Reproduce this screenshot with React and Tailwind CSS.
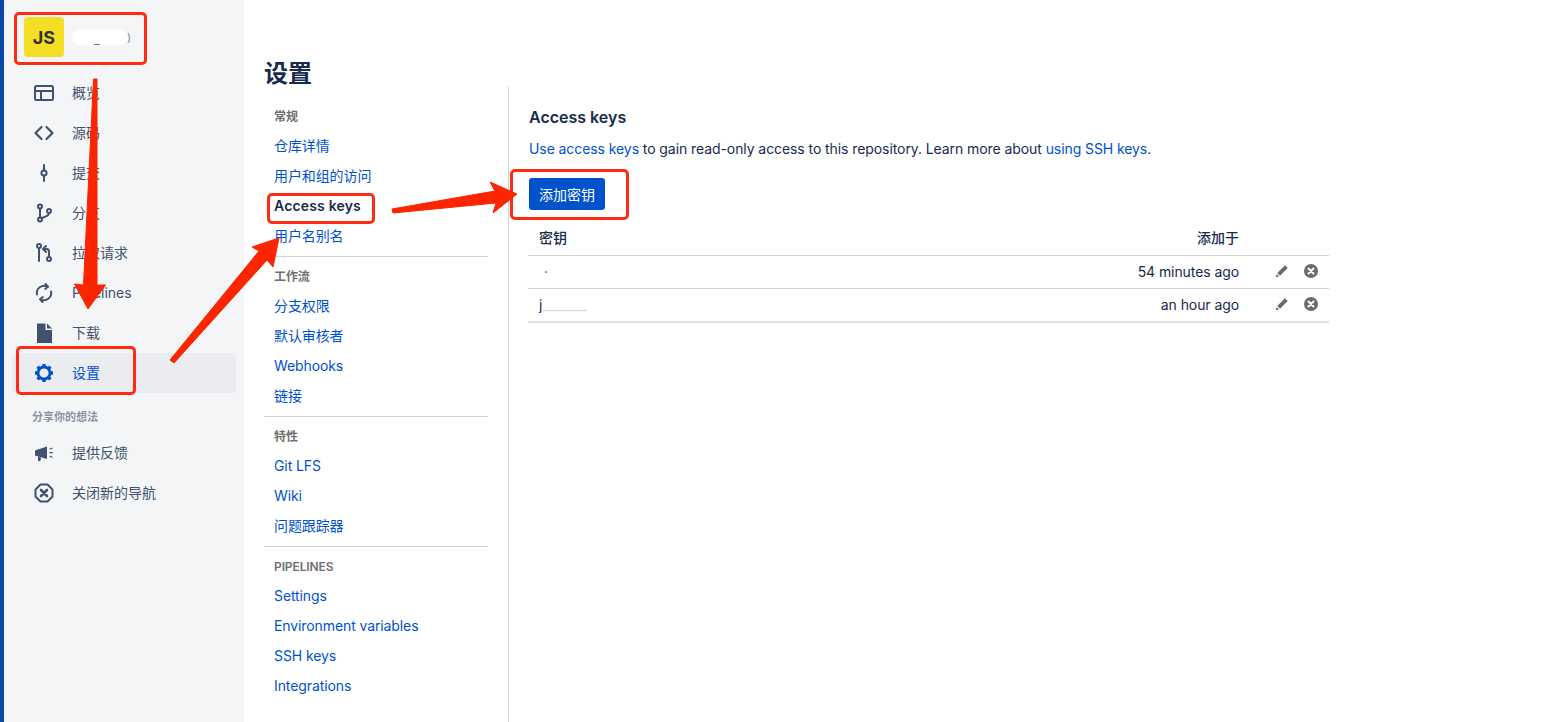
import { Fragment } from 'react';

const font = { fontFamily: 'Inter, "Noto Sans CJK SC", sans-serif' };

const navItems = [
  { label: '概览', icon: 'overview' },
  { label: '源码', icon: 'code' },
  { label: '提交', icon: 'commit' },
  { label: '分支', icon: 'branch' },
  { label: '拉取请求', icon: 'pr' },
  { label: 'Pipelines', icon: 'pipelines' },
  { label: '下载', icon: 'file' },
  { label: '设置', icon: 'gear', active: true },
];

const settingsGroups = [
  { title: '常规', links: ['仓库详情', '用户和组的访问', 'Access keys', '用户名别名'] },
  { title: '工作流', links: ['分支权限', '默认审核者', 'Webhooks', '链接'] },
  { title: '特性', links: ['Git LFS', 'Wiki', '问题跟踪器'] },
  { title: 'PIPELINES', links: ['Settings', 'Environment variables', 'SSH keys', 'Integrations'] },
];

function NavIcon({ name }) {
  const stroke = { fill: 'none', stroke: 'currentColor', strokeWidth: 2, strokeLinecap: 'round', strokeLinejoin: 'round' };
  return (
    <svg viewBox="0 0 24 24" className="w-6 h-6 shrink-0">
      {name === 'overview' && (
        <g {...stroke}>
          <rect x="3" y="5" width="18" height="14" rx="1.5" />
          <path d="M3 10h18M9 10v9" />
        </g>
      )}
      {name === 'code' && <path {...stroke} strokeWidth="2.2" d="M9.5 6 3.5 12l6 6M14.5 6l6 6-6 6" />}
      {name === 'commit' && (
        <g {...stroke}>
          <circle cx="12" cy="12" r="2.6" />
          <path d="M12 4v5.4M12 14.6V20" />
        </g>
      )}
      {name === 'branch' && (
        <g {...stroke}>
          <circle cx="8" cy="5.5" r="2" />
          <circle cx="8" cy="18.5" r="2" />
          <circle cx="17" cy="10" r="2" />
          <path d="M8 7.5v9M17 12c0 3-3 3.5-7.5 5" />
        </g>
      )}
      {name === 'pr' && (
        <g {...stroke}>
          <circle cx="7" cy="5" r="2" />
          <path d="M7 7v13" />
          <circle cx="17" cy="18" r="2" />
          <path d="M17 16v-5.5c0-1.5-1-2.5-2.500-2.500H12M14 5l-3 3 3 3" />
        </g>
      )}
      {name === 'pipelines' && (
        <g {...stroke}>
          <path d="M5 13.500A7.200 7.200 0 0 1 15.500 5.700M19 10.500A7.200 7.200 0 0 1 8.500 18.300" />
          <path d="M13.500 3l2.500 2.800-2.800 2.200M10.500 21 8 18.200l2.800-2.200" />
        </g>
      )}
      {name === 'file' && <path fill="currentColor" d="M5 2.500h8.500v6.500H20V22H5zM15 2.500 20 7.500h-5z" />}
      {name === 'gear' && (
        <g>
          <circle cx="12" cy="12" r="6" fill="none" stroke="currentColor" strokeWidth="2.800" />
          <path fill="none" stroke="currentColor" strokeWidth="3.400" d="M12 3v3M12 18v3M3 12h3M18 12h3M5.600 5.600l2 2M16.400 16.400l2 2M5.600 18.400l2-2M16.400 7.600l2-2" />
        </g>
      )}
      {name === 'megaphone' && (
        <g>
          <path fill="currentColor" d="M3 9.500 15 5.500v12.500L3 14.500zM6 15.500l3 1-.6 3.500H6z" />
          <path {...stroke} strokeWidth="1.200" d="M18 8l2-.8M18 11.700h2.400M18 15.400l2 .8" />
        </g>
      )}
      {name === 'close' && (
        <g {...stroke}>
          <path d="M8.500 3.500h7l5 5v7l-5 5h-7l-5-5v-7z" strokeWidth="2" />
          <path d="m9 9 6 6M15 9l-6 6" strokeWidth="2.600" />
        </g>
      )}
    </svg>
  );
}

function NavRow({ item }) {
  return (
    <div className={`h-10 flex items-center pl-5 pr-2 rounded ${item.active ? 'bg-[#ebecf0] text-[#0052cc]' : 'text-[#42526e]'}`}>
      <NavIcon name={item.icon} />
      <span className="ml-4 mb-[2px] text-[14px]">{item.label}</span>
    </div>
  );
}

function Sidebar() {
  return (
    <aside className="w-[244px] shrink-0 flex bg-[#f4f5f7]">
      <div className="w-1 bg-[#0747a6]" />
      <div className="flex-1 pl-2 pr-2">
        <div className="h-[73px] pt-[17px] pl-3 flex items-start">
          <div className="w-10 h-10 rounded bg-[#f4df26] flex items-center justify-center text-[18px] font-bold text-[#323330]">JS</div>
          {/* blurred out repo name */}
          <div className="relative ml-2 mt-[13px] w-[56px] h-[15px]">
            <div className="absolute inset-0 rounded-full bg-white blur-[1px]" />
            <div className="absolute left-[22px] bottom-0 w-[6px] h-px bg-[#6b778c]" />
            <span className="absolute -right-[3px] top-0 text-[11px] leading-[15px] text-[#7a869a]">)</span>
          </div>
        </div>
        {navItems.map(item => <NavRow key={item.label} item={item} />)}
        <div className="h-[46px] pl-5 pt-4 text-[11px] leading-4 font-semibold text-[#8993a4]">分享你的想法</div>
        <div className="-mt-[6px]">
          <NavRow item={{ label: '提供反馈', icon: 'megaphone' }} />
          <NavRow item={{ label: '关闭新的导航', icon: 'close' }} />
        </div>
      </div>
    </aside>
  );
}

function SettingsNav() {
  return (
    <nav className="w-[224px] shrink-0 mt-[10px] text-[14px] tracking-[-0.1px]">
      {settingsGroups.map((group, i) => (
        <Fragment key={group.title}>
          {i > 0 && <div className="h-px bg-[#d0d2d6] mt-[6px]" />}
          <div className="pl-[10px] h-[33px] pt-[13px] text-[12px] leading-[14px] font-semibold text-[#6f6f6f]">{group.title}</div>
          {group.links.map(link => (
            <div key={link} className={`pl-[10px] h-[30px] flex items-center ${link === 'Access keys' ? 'font-semibold tracking-[0.17px] text-[#172b4d]' : 'text-[#0052cc]'}`}>
              {link}
            </div>
          ))}
        </Fragment>
      ))}
    </nav>
  );
}

function KeyRow({ name, added, nameClass, last }) {
  return (
    <div className={`flex items-center pb-px text-[14px] tracking-[-0.08px] text-[#172b4d] ${last ? 'h-[34px] border-b-2 border-[#dfe1e6]' : 'h-[33px] border-b border-[#d0d2d6]'}`}>
      <span className={`flex-1 ${nameClass}`}>{name}</span>
      <span>{added}</span>
      <div className="w-[90px] mb-[2px] flex items-center justify-end pr-[10px] gap-[13px] text-[#6b6b6b]">
        <svg viewBox="0 0 16 16" className="w-4 h-4">
          <path fill="currentColor" d="M11 2.200 13.800 5 6 12.800 3.200 10zM2.600 11l2.400 2.400-3.200.8z" />
        </svg>
        <svg viewBox="0 0 16 16" className="w-4 h-4">
          <circle cx="8" cy="8" r="7" fill="currentColor" />
          <path stroke="#fff" strokeWidth="2" strokeLinecap="round" d="m5.500 5.500 5 5M10.500 5.500l-5 5" />
        </svg>
      </div>
    </div>
  );
}

function AccessKeys() {
  return (
    <section className="flex-1 pl-[20px] max-w-[820px]">
      <h2 className="mt-[20px] text-[16px] leading-5 font-semibold text-[#172b4d]">Access keys</h2>
      <p className="mt-[12px] text-[14px] leading-5 tracking-[-0.08px] text-[#172b4d]">
        <span className="text-[#0052cc]">Use access keys</span> to gain read-only access to this repository. Learn more about <span className="text-[#0052cc]">using SSH keys</span>.
      </p>
      <button className="mt-[19px] h-8 w-[76px] rounded-[3px] bg-[#0052cc] text-[14px] text-white">添加密钥</button>
      <div className="mt-[14px] ml-[-1px]">
        <div className="h-[32px] pb-[4px] flex items-center border-b border-[#d0d2d6] text-[14px] font-medium text-[#172b4d]">
          <span className="pl-[11px] flex-1">密钥</span>
          <span className="mr-[90px]">添加于</span>
        </div>
        <KeyRow name="·" added="54 minutes ago" nameClass="pl-[16px] text-[#c1440e]" />
        <KeyRow name={<>j<span className="text-[#d6d8dc]">_______</span></>} added="an hour ago" nameClass="pl-[11px]" last />
      </div>
    </section>
  );
}

// the red marks drawn over the screenshot
function Annotations() {
  const boxes = [
    'left-[14px] top-[12px] w-[133px] h-[53px]',
    'left-[16px] top-[346px] w-[120px] h-[49px]',
    'left-[267px] top-[193px] w-[108px] h-[31px]',
    'left-[510px] top-[169px] w-[119px] h-[51px]',
  ];
  return (
    <div className="absolute inset-0 pointer-events-none">
      {boxes.map(b => <div key={b} className={`absolute ${b} border-[3px] border-[#ff2a12] rounded-[5px]`} />)}
      <svg className="absolute inset-0 w-full h-full" viewBox="0 0 1565 722">
        <g fill="#fb2500" stroke="#fb2500" strokeLinejoin="round" strokeWidth="1">
          <path d="M93.500 79h3.500L97 285l8.500 0L88 309 74.500 284l9 1z" />
          <path d="M170 360 259 251 252 247 279 238 273 267 267 260 174 363z" />
          <path d="M392 209 495 191 490 182 517 194 493 213 496 203 393 213z" />
        </g>
      </svg>
    </div>
  );
}

export default function App() {
  return (
    <div className="relative w-[1565px] h-[722px] overflow-hidden flex bg-white" style={font}>
      <Sidebar />
      <main className="flex-1 pl-[20px]">
        <h1 className="mt-[60px] h-[27px] text-[24px] leading-7 font-semibold text-[#172b4d]">设置</h1>
        <div className="flex h-full">
          <SettingsNav />
          <div className="w-px bg-[#d0d2d6] ml-[20px]" />
          <AccessKeys />
        </div>
      </main>
      <Annotations />
    </div>
  );
}
